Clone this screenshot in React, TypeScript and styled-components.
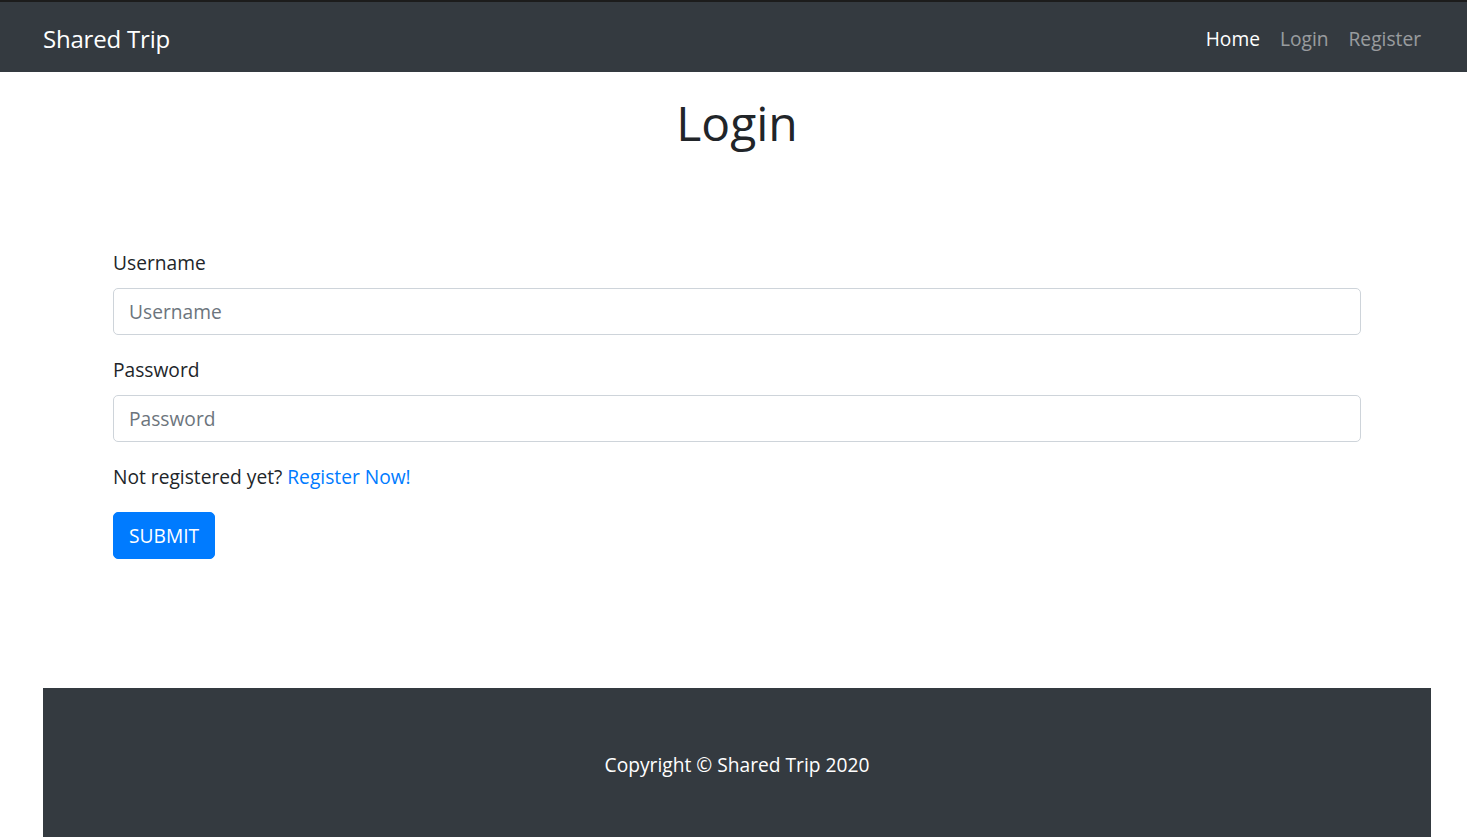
import * as React from "react";
import styled, { createGlobalStyle } from "styled-components";

const GlobalStyle = createGlobalStyle`
  html, body {
    margin: 0;
    padding: 0;
    background: #fff;
  }
  body {
    font-family: "Open Sans", "Noto Sans", "Liberation Sans", sans-serif;
    font-size: 19.2px;
    line-height: 30px;
    color: #212529;
  }
  * {
    box-sizing: border-box;
  }
`;

const Navbar = styled.nav`
  display: flex;
  align-items: center;
  justify-content: space-between;
  height: 72px;
  padding: 4px 46px 0 43px;
  background: #343a40;
  border-top: 2px solid #1c1c1c;
`;

const Brand = styled.a`
  font-size: 24px;
  color: #fff;
  text-decoration: none;
  letter-spacing: -0.2px;
`;

const NavLinks = styled.div`
  display: flex;
  gap: 20px;
`;

const NavLink = styled.a<{ $active?: boolean }>`
  font-size: 19.2px;
  color: ${(p) => (p.$active ? "#fff" : "rgba(255, 255, 255, 0.5)")};
  text-decoration: none;
`;

const Main = styled.main`
  padding: 0 106px 0 113px;
`;

const Title = styled.h1`
  margin: 21px 0 95px;
  font-size: 48px;
  font-weight: 400;
  line-height: 60px;
  text-align: center;
`;

const FormGroup = styled.div`
  margin-bottom: 20px;
`;

const Label = styled.label`
  display: block;
  margin-bottom: 10px;
`;

const Input = styled.input`
  display: block;
  width: 100%;
  height: 47px;
  padding: 7px 15px;
  font: inherit;
  color: #495057;
  border: 1px solid #ced4da;
  border-radius: 5px;
  outline: none;

  &::placeholder {
    color: #6c757d;
  }
`;

const Hint = styled.p`
  margin: 0 0 20px;
`;

const Link = styled.a`
  color: #007bff;
  text-decoration: none;
`;

const SubmitButton = styled.button`
  display: inline-block;
  height: 47px;
  padding: 0 15px;
  font: inherit;
  color: #fff;
  background: #007bff;
  border: 1px solid #007bff;
  border-radius: 5px;
`;

const Footer = styled.footer`
  margin: 129px 36px 0 43px;
  padding: 62px 0 60px;
  background: #343a40;
  color: #fff;
  text-align: center;
`;

const App: React.FC = () => {
  return (
    <>
      <GlobalStyle />
      <Navbar>
        <Brand href="#">Shared Trip</Brand>
        <NavLinks>
          <NavLink $active href="#">Home</NavLink>
          <NavLink href="#">Login</NavLink>
          <NavLink href="#">Register</NavLink>
        </NavLinks>
      </Navbar>
      <Main>
        <Title>Login</Title>
        <form onSubmit={(e) => e.preventDefault()}>
          <FormGroup>
            <Label htmlFor="username">Username</Label>
            <Input id="username" type="text" placeholder="Username" />
          </FormGroup>
          <FormGroup>
            <Label htmlFor="password">Password</Label>
            <Input id="password" type="password" placeholder="Password" />
          </FormGroup>
          <Hint>
            Not registered yet? <Link href="#">Register Now!</Link>
          </Hint>
          <SubmitButton type="submit">SUBMIT</SubmitButton>
        </form>
      </Main>
      <Footer>Copyright © Shared Trip 2020</Footer>
    </>
  );
};

export default App;
